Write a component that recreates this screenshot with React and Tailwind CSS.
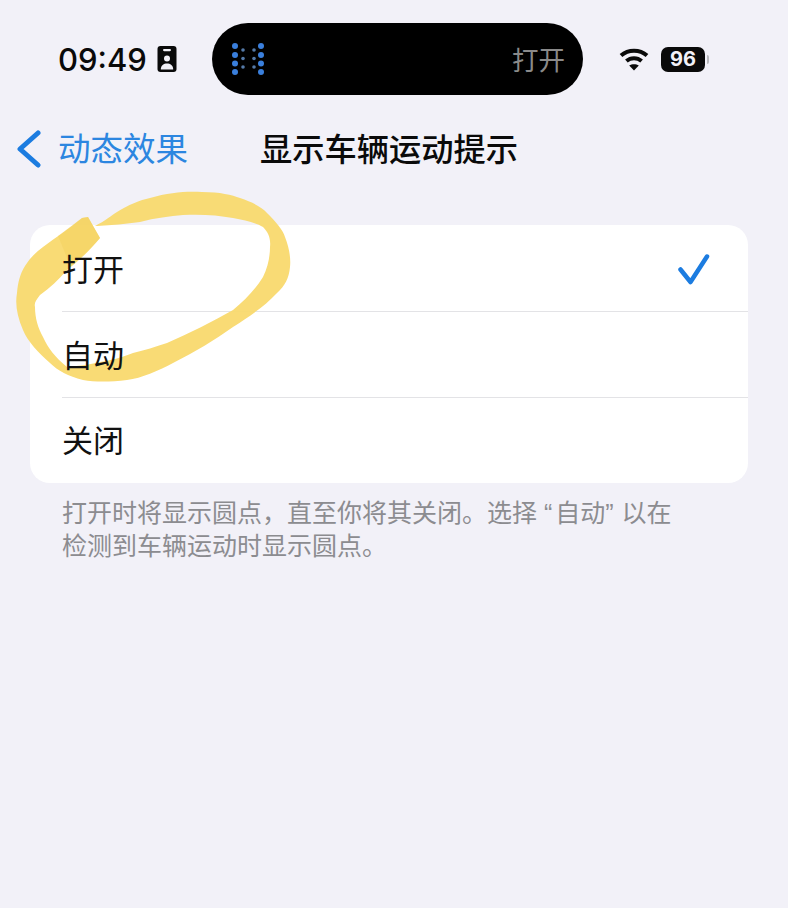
import React from 'react';

const OPTIONS = ['打开', '自动', '关闭'];

function ContactIcon() {
  return (
    <svg width="20" height="26" viewBox="0 0 20 26" className="block">
      <rect x="0.5" y="0" width="19" height="26" rx="3" fill="#0a0a0a" />
      <rect x="6" y="3" width="8" height="2.2" rx="1.1" fill="#f2f1f8" />
      <circle cx="10" cy="12.5" r="3" fill="#f2f1f8" />
      <path d="M3.8 23.4 C3.8 19.4 6.8 17.6 10 17.6 C13.2 17.6 16.2 19.4 16.2 23.4 Z" fill="#f2f1f8" />
    </svg>
  );
}

function IslandDots() {
  const big = [46, 55, 63.5, 72];
  const small = [50, 58.5, 67];
  return (
    <svg width="34" height="36" viewBox="231 41 34 36" className="block">
      {big.map((y) => (
        <g key={y} fill="#3a7fdc">
          <circle cx="235" cy={y} r="3" />
          <circle cx="261" cy={y} r="3" />
        </g>
      ))}
      {small.map((y) => (
        <g key={y} fill="#557aa8">
          <circle cx="243" cy={y} r="1.8" />
          <circle cx="254" cy={y} r="1.8" />
        </g>
      ))}
    </svg>
  );
}

function WifiIcon() {
  return (
    <svg width="30" height="24" viewBox="0 0 30 24" className="block" fill="none" stroke="#0a0a0a" strokeWidth="4">
      <path d="M2 8.6 C9.4 2 20.6 2 28 8.6" />
      <path d="M7.4 14 C11.8 10.2 18.2 10.2 22.6 14" />
      <path d="M15 23.5 L10.2 18.6 C13 16.8 17 16.8 19.8 18.6 Z" fill="#0a0a0a" stroke="none" />
    </svg>
  );
}

// marker scribble round the first two options, sits under the labels
function Highlighter() {
  return (
    <svg width="300" height="200" viewBox="10 190 300 200" className="absolute left-[10px] top-[190px] z-10 opacity-95 pointer-events-none">
      <path
        fill="#f9da6e"
        d="M95 226 C105 221 112 215 117 212 C128 205 140 200 150 198 C170 192 188 191 202 192 C220 192 232 195 240 198 C252 202 262 207 267 213 C276 222 283 230 285 237 C289 247 291 258 290 267 C289 278 285 286 277 293 C265 306 250 316 233 327 C215 340 195 352 173 363 C158 371 142 378 127 380 C110 382 95 382 83 380 C68 376 58 371 50 363 C38 352 28 342 23 330 C17 316 15 304 17 293 C18 282 20 274 25 266 C30 258 36 252 43 247 C55 238 70 228 82 218 L88 217 L100 238 C90 250 80 260 67 270 C58 280 50 288 40 295 C36 300 34 303 35 307 C35 318 38 328 43 337 C48 348 55 357 67 367 C80 366 92 364 100 362 C112 360 120 358 133 353 C145 350 155 347 167 343 C190 333 212 322 233 310 C245 300 255 290 263 277 C268 267 270 256 270 247 C271 238 268 232 263 227 C256 223 245 220 233 218 C218 215 200 214 183 215 C170 216 155 218 140 222 C126 224 112 225 97 226 Z"
      />
      <path fill="#f2cc55" opacity="0.45" d="M82 218 L88 217 L100 238 C90 250 80 258 70 266 C66 255 62 245 58 236 C66 230 74 224 82 218 Z" />
    </svg>
  );
}

export default function App() {
  return (
    <div className="relative min-h-[908px] bg-[#f2f1f8] text-black font-['Noto_Sans_CJK_SC','Noto_Sans',sans-serif] overflow-hidden pt-[23px]">
      {/* status bar */}
      <div className="flex items-center h-[72px] pl-[58px]">
        <span className="w-[88px] text-[31px] font-[550] leading-none font-['Inter',sans-serif] text-[#0a0a0a]">09:49</span>
        <span className="ml-[11px]"><ContactIcon /></span>
        <div className="ml-[35px] w-[371px] h-[72px] rounded-full bg-black flex items-center justify-between pl-[19px] pr-[18px]">
          <IslandDots />
          <span className="text-[26.5px] leading-none text-[#8a8a8a]">打开</span>
        </div>
        <span className="ml-[36px]"><WifiIcon /></span>
        <div className="ml-[12px] w-[44px] h-[25px] rounded-[7px] bg-[#0a0a0a] flex items-center justify-center">
          <span className="text-[20px] font-bold leading-none text-[#f2f1f8] font-['Inter',sans-serif]">96</span>
        </div>
        <div className="ml-[2px] w-[2px] h-[9px] rounded-r bg-[#b9b9bd]" />
      </div>

      {/* nav */}
      <div className="flex items-center h-[40px] mt-[34px] pl-[17px]">
        <svg width="24" height="38" viewBox="0 0 24 38" fill="none" stroke="#1c7ce0" strokeWidth="5" strokeLinecap="round" strokeLinejoin="round" className="block">
          <path d="M21 3 L3 19 L21 35" />
        </svg>
        <span className="ml-[17px] w-[130px] pb-[4px] text-[32.5px] leading-[36px] whitespace-nowrap text-[#2c86e0]">动态效果</span>
        <span className="ml-[72px] pb-[4px] text-[32.25px] leading-[36px] font-medium whitespace-nowrap text-[#0a0a0a]">显示车辆运动提示</span>
      </div>

      {/* options */}
      <div className="mt-[56px] ml-[30px] w-[718px] rounded-[20px] bg-white pl-[32px] pt-[1px]">
        {OPTIONS.map((label, i) => (
          <div key={label} className={`flex items-center justify-between pr-[38px] ${i < OPTIONS.length - 1 ? 'h-[86px] border-b border-[#e3e3e6]' : 'h-[85px]'}`}>
            <span className={`relative z-20 text-[31px] leading-none text-[#111] ${i < OPTIONS.length - 1 ? 'pb-[3px]' : 'pb-[5px]'}`}>{label}</span>
            {i === 0 && (
              <svg width="32" height="32" viewBox="0 0 32 32" fill="none" stroke="#1c7ce0" strokeWidth="4.5" strokeLinecap="round" strokeLinejoin="round" className="block">
                <path d="M2.5 16.5 L12.5 29 L29 3.5" />
              </svg>
            )}
          </div>
        ))}
      </div>

      {/* footer note */}
      <p className="mt-[13px] ml-[62px] w-[640px] text-[25px] leading-[31px] text-[#8c8c90]">
        打开时将显示圆点，直至你将其关闭。选择<span className="font-['Liberation_Sans'] mr-[3px]"> “</span>自动<span className="font-['Liberation_Sans'] mr-[1px]">” </span>以在
        <br />
        检测到车辆运动时显示圆点。
      </p>

      <Highlighter />
    </div>
  );
}
